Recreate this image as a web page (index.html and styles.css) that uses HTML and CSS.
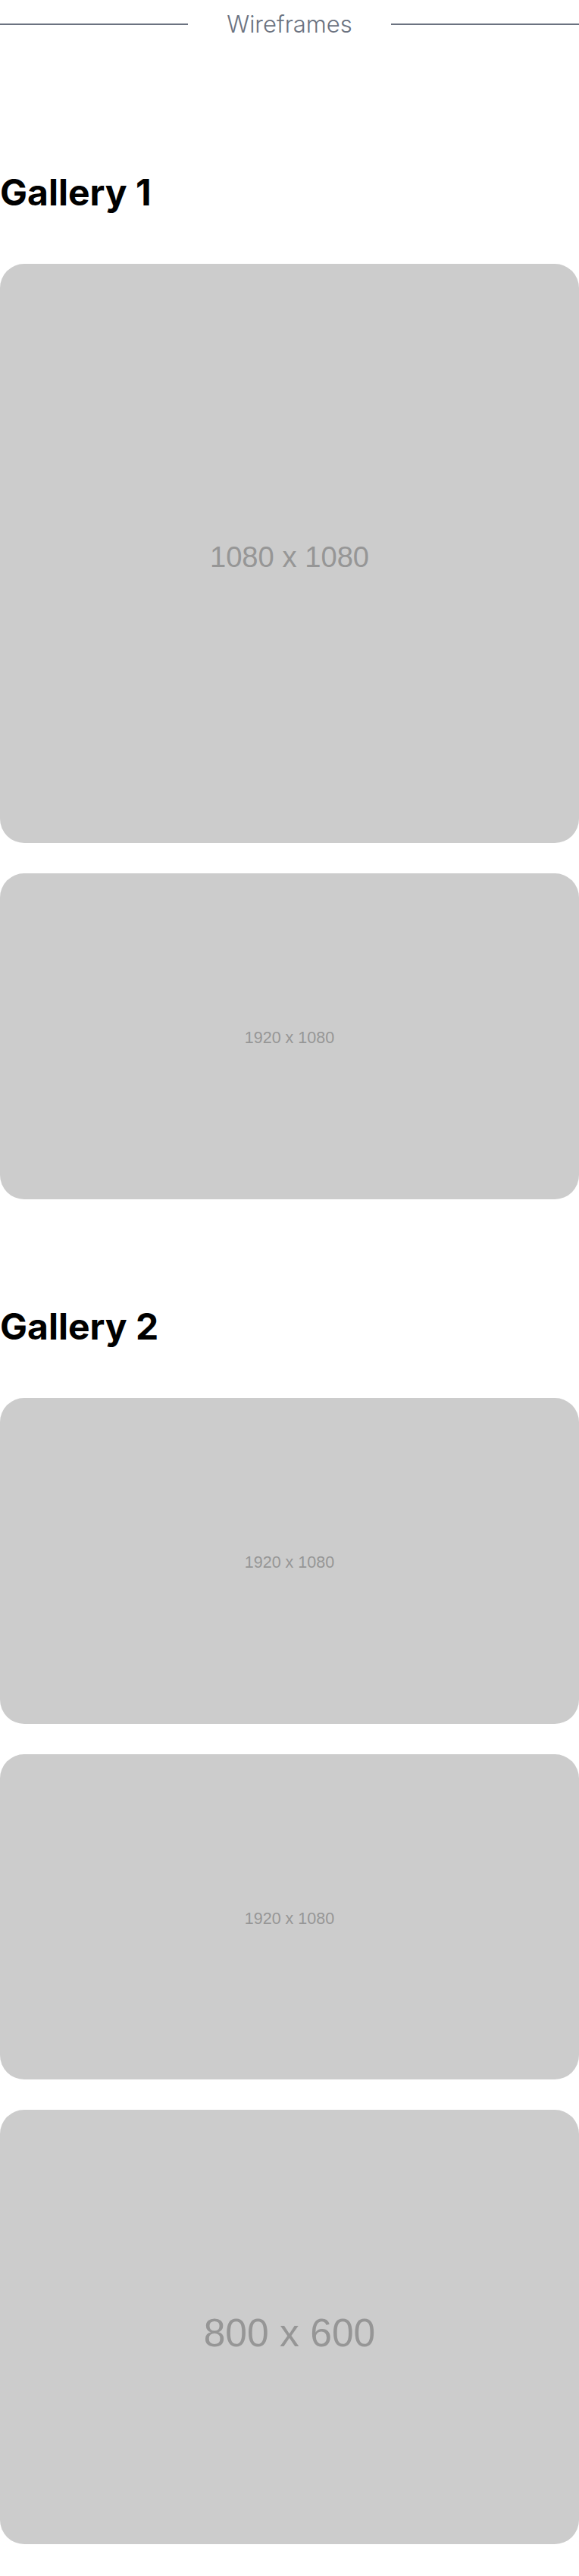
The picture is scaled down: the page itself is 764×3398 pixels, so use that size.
FILE: index.html
```html
<!DOCTYPE html>
<html lang="en">
<head>
<meta charset="utf-8">
<title>Wireframes</title>
<link rel="stylesheet" href="styles.css">
</head>
<body>
<header class="divider">
  <span class="divider-line"></span>
  <span class="divider-text">Wireframes</span>
  <span class="divider-line"></span>
</header>

<section class="gallery gallery-first">
  <h2 class="gallery-title">Gallery 1</h2>
  <div class="gallery-list">
    <div class="ph ph-1080"><span class="ph-text ph-text-1080">1080 x 1080</span></div>
    <div class="ph ph-1920"><span class="ph-text ph-text-1920">1920 x 1080</span></div>
  </div>
</section>

<section class="gallery gallery-next">
  <h2 class="gallery-title">Gallery 2</h2>
  <div class="gallery-list">
    <div class="ph ph-1920"><span class="ph-text ph-text-1920">1920 x 1080</span></div>
    <div class="ph ph-1920"><span class="ph-text ph-text-1920">1920 x 1080</span></div>
    <div class="ph ph-800"><span class="ph-text ph-text-800">800 x 600</span></div>
  </div>
</section>
</body>
</html>
```

FILE: styles.css
```css
html, body {
  margin: 0;
  padding: 0;
  background: #ffffff;
}

body {
  font-family: Inter, "Liberation Sans", sans-serif;
  color: #000000;
  padding-bottom: 41px;
}

.divider {
  display: flex;
  align-items: center;
  padding-top: 14px;
  height: 36px;
}

.divider-line {
  flex: 1;
  height: 2px;
  background: #6b7280;
}

.divider-text {
  margin: 0 51px;
  font-size: 31px;
  line-height: 36px;
  font-weight: 300;
  color: #6b7280;
}

.gallery-first {
  margin-top: 180px;
}

.gallery-next {
  margin-top: 144px;
}

.gallery-title {
  margin: 0 0 70px;
  font-size: 48px;
  line-height: 48px;
  font-weight: 700;
}

.gallery-list {
  display: flex;
  flex-direction: column;
  gap: 40px;
}

.ph {
  background: #cccccc;
  border-radius: 32px;
  display: flex;
  align-items: center;
  justify-content: center;
  width: 100%;
}

.ph-1080 { aspect-ratio: 1080 / 1080; }
.ph-1920 { aspect-ratio: 1920 / 1080; }
.ph-800 { aspect-ratio: 800 / 600; }

.ph-text {
  font-family: "Liberation Sans", Arial, sans-serif;
  color: #969696;
  white-space: nowrap;
  padding-top: 0.28em;
}

.ph-text-1080 { font-size: 38.2px; }
.ph-text-1920 { font-size: 21.5px; }
.ph-text-800 { font-size: 51.6px; }
```
